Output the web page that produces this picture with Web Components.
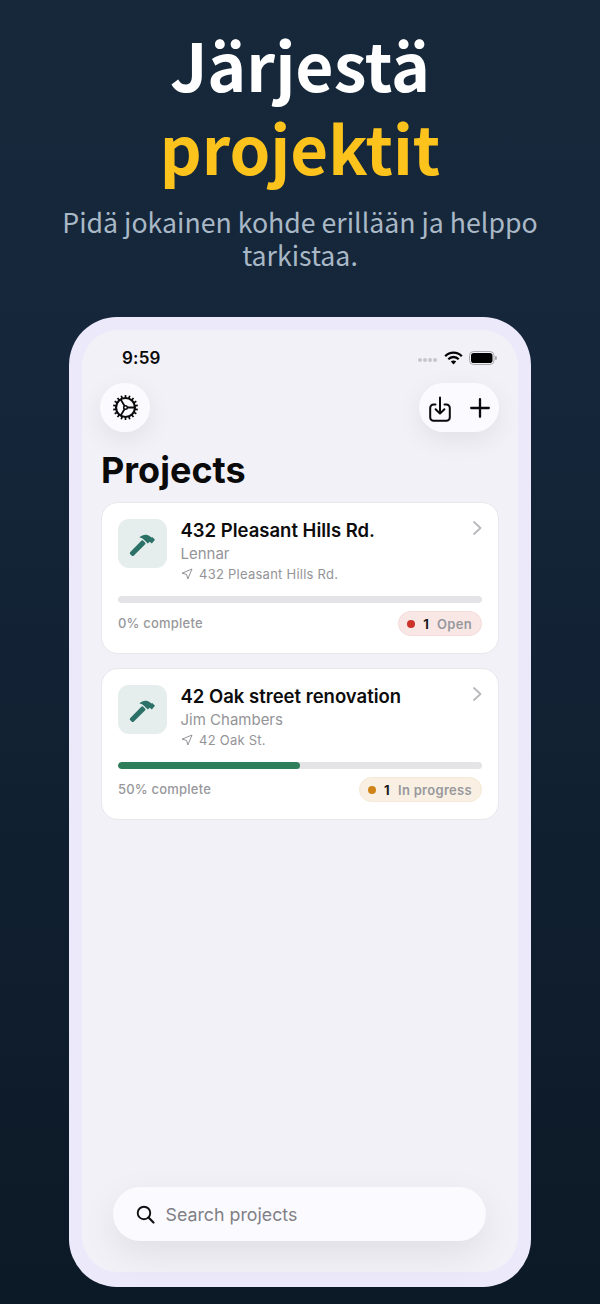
<!DOCTYPE html>
<html>
<head>
<meta charset="utf-8">
<style>
    html, body { margin: 0; padding: 0; }
    body {
        width: 600px;
        height: 1304px;
        overflow: hidden;
        background: linear-gradient(180deg, #16283a 0%, #15263a 30%, #0c1926 100%);
        font-family: 'Inter', 'Liberation Sans', sans-serif;
    }
</style>
</head>
<body>
<promo-screen>
    <span slot="line1">Järjestä</span>
    <span slot="line2">projektit</span>
    <span slot="sub">Pidä jokainen kohde erillään ja helppo tarkistaa.</span>
    <phone-frame>
        <status-bar></status-bar>
        <app-toolbar></app-toolbar>
        <div style="font: 700 36px/40px 'Inter', sans-serif; color: #0a0a0a; margin: 18px 0 12px 0;">Projects</div>
        <project-card title="432 Pleasant Hills Rd." owner="Lennar" address="432 Pleasant Hills Rd." percent="0" count="1" status="Open" tone="red"></project-card>
        <project-card title="42 Oak street renovation" owner="Jim Chambers" address="42 Oak St." percent="50" count="1" status="In progress" tone="orange" style="margin-top: 14px"></project-card>
        <search-pill placeholder="Search projects"></search-pill>
    </phone-frame>
</promo-screen>

<script>
class PromoScreen extends HTMLElement {
    constructor() {
        super()
        this.attachShadow({ mode: 'open' }).innerHTML = `
        <style>
            :host { display: block; width: 600px; height: 1304px; }
            .head { padding-top: 22px; text-align: center; font-family: 'Noto Sans CJK SC', 'Noto Sans', sans-serif; }
            .big { font-size: 66px; font-weight: 700; line-height: 83px; height: 83px; }
            .white { color: #fff; }
            .yellow { color: #fdc31d; font-size: 65.3px; }
            .sub { width: 500px; margin: 17px auto 0; color: #a9b8c6; font-size: 26.7px; line-height: 33px; font-weight: 400; }
            .stage { margin-top: 46px; display: flex; justify-content: center; }
        </style>
        <div class="head">
            <div class="big white"><slot name="line1"></slot></div>
            <div class="big yellow"><slot name="line2"></slot></div>
            <div class="sub"><slot name="sub"></slot></div>
        </div>
        <div class="stage"><slot></slot></div>`
    }
}

class PhoneFrame extends HTMLElement {
    constructor() {
        super()
        this.attachShadow({ mode: 'open' }).innerHTML = `
        <style>
            :host { display: block; width: 462px; height: 970px; box-sizing: border-box; padding: 13px 13px 15px; background: #ece9fb; border-radius: 48px; }
            .screen { height: 100%; box-sizing: border-box; padding: 0 19px 31px; background: #f2f1f7; border-radius: 36px; display: flex; flex-direction: column; }
        </style>
        <div class="screen"><slot></slot></div>`
    }
}

class StatusBar extends HTMLElement {
    constructor() {
        super()
        this.attachShadow({ mode: 'open' }).innerHTML = `
        <style>
            :host { display: flex; height: 53px; box-sizing: border-box; align-items: center; justify-content: space-between; padding: 2px 2px 0 21px; font: 600 17px 'Inter', sans-serif; color: #0a0a0a; }
            .time { letter-spacing: 0.2px; }
            .right { display: flex; align-items: center; gap: 6px; }
            .dots { display: flex; gap: 1px; margin-top: 5px; margin-right: 1px; }
            .dots i { width: 4px; height: 4px; border-radius: 50%; background: #c6c6ca; }
        </style>
        <span class="time">9:59</span>
        <div class="right">
            <div class="dots"><i></i><i></i><i></i><i></i></div>
            <svg width="19" height="14" viewBox="0 0 19 14">
                <path d="M1.2 5.2a11.6 11.6 0 0 1 16.6 0" fill="none" stroke="#000" stroke-width="2.3"/>
                <path d="M4.3 8.2a7.3 7.3 0 0 1 10.4 0" fill="none" stroke="#000" stroke-width="2.3"/>
                <path d="M6.8 10.6a3.7 3.7 0 0 1 5.4 0L9.5 13.6z" fill="#000"/>
            </svg>
            <svg width="28" height="14" viewBox="0 0 28 14">
                <rect x="0.5" y="0.5" width="24.5" height="13" rx="4" fill="none" stroke="#a9a9ad"/>
                <rect x="2" y="2" width="21.5" height="10" rx="2.8" fill="#000"/>
                <rect x="26" y="5" width="1.8" height="4" rx="0.9" fill="#a9a9ad"/>
            </svg>
        </div>`
    }
}

class AppToolbar extends HTMLElement {
    constructor() {
        super()
        const teeth = Array.from({ length: 18 }, (_, i) =>
            `<rect x="11.25" y="0.9" width="1.5" height="3" transform="rotate(${i * 20} 12 12)"/>`).join('')
        this.attachShadow({ mode: 'open' }).innerHTML = `
        <style>
            :host { display: flex; justify-content: space-between; align-items: center; }
            .btn { height: 49px; background: #fbfaff; border-radius: 25px; display: flex; align-items: center; justify-content: center; box-shadow: 0 8px 26px rgba(0,0,0,0.07); }
            .gear { width: 50px; margin-left: -1px; }
            .pair { width: 80px; gap: 19px; }
            svg { display: block; }
        </style>
        <div class="btn gear">
            <svg width="27" height="27" viewBox="0 0 24 24" fill="#0a0a0a" style="margin-top:-1px">
                ${teeth}
                <circle cx="12" cy="12" r="8.4" fill="none" stroke="#0a0a0a" stroke-width="1.9"/>
                <circle cx="12" cy="12" r="1.6" fill="none" stroke="#0a0a0a" stroke-width="1.3"/>
                <path d="M13.6 12H20M11.2 10.6 7.8 5M11.2 13.4 7.8 19" stroke="#0a0a0a" stroke-width="1.6" fill="none"/>
            </svg>
        </div>
        <div class="btn pair">
            <svg width="22" height="26" viewBox="0 0 22 26" fill="none" stroke="#0a0a0a" stroke-width="2" stroke-linecap="round" stroke-linejoin="round" style="margin-top:2px">
                <path d="M6.5 8.5H4.6A3.4 3.4 0 0 0 1.2 11.9V21.4A3.4 3.4 0 0 0 4.6 24.8H17.4A3.4 3.4 0 0 0 20.8 21.4V11.9A3.4 3.4 0 0 0 17.4 8.5H15.5"/>
                <path d="M11 1.5V17.5M6.6 13.2 11 17.6 15.4 13.2"/>
            </svg>
            <svg width="20" height="20" viewBox="0 0 20 20" stroke="#0a0a0a" stroke-width="2.3" stroke-linecap="round">
                <path d="M10 1.2V18.8M1.2 10H18.8"/>
            </svg>
        </div>`
    }
}

class ProjectCard extends HTMLElement {
    constructor() {
        super()
        const get = n => this.getAttribute(n)
        const tones = {
            red: { bg: '#f9e7e6', border: '#f5dcda', dot: '#cc3329' },
            orange: { bg: '#f9f0e3', border: '#f6e8d4', dot: '#d08318' },
        }
        const t = tones[get('tone')]
        this.attachShadow({ mode: 'open' }).innerHTML = `
        <style>
            :host { display: block; height: 152px; box-sizing: border-box; background: #fff; border: 1px solid #e8e8ec; border-radius: 17px; padding: 16px 16px 0 16px; position: relative; }
            .top { display: flex; gap: 13.5px; height: 77px; }
            .tile { width: 49px; height: 49px; border-radius: 11px; background: #e5eeec; flex: none; }
            .tile svg { display: block; }
            .title { font: 600 18.5px/25px 'Inter', sans-serif; color: #0c0c0c; margin-top: -1px; }
            .owner { font: 400 15px/20px 'Inter', sans-serif; color: #949498; margin-top: 1px; }
            .addr { display: flex; align-items: center; gap: 6px; font: 400 13px/20px 'Inter', sans-serif; color: #949498; letter-spacing: 0.25px; margin-left: 0.5px; }
            .chev { position: absolute; top: 17px; right: 16px; }
            .track { height: 7px; border-radius: 4px; background: #e4e4e6; overflow: hidden; }
            .fill { height: 100%; width: ${get('percent')}%; background: #2e7d5b; border-radius: 4px; }
            .foot { display: flex; justify-content: space-between; align-items: center; margin-top: 8px; }
            .pct { font: 500 13px 'Inter', sans-serif; color: #98989c; letter-spacing: 0.2px; margin-top: -1px; }
            .badge { display: flex; align-items: center; height: 25px; box-sizing: border-box; padding: 0 9px 0 8px; border-radius: 13px; background: ${t.bg}; border: 1px solid ${t.border}; font: 600 13px 'Inter', sans-serif; color: #98989c; letter-spacing: 0.3px; }
            .dot { width: 8px; height: 8px; border-radius: 50%; background: ${t.dot}; margin-right: 8px; }
            .num { color: #1a1a1a; font-weight: 700; margin-right: 8px; }
        </style>
        <div class="top">
            <div class="tile">
                <svg width="49" height="49" viewBox="0 0 49 49" fill="#2b7167">
                    <path d="M12.3 32.9 23.6 21.6A1 1 0 0 1 25 21.6L27.2 23.8A1 1 0 0 1 27.2 25.2L15.9 36.5A1.6 1.6 0 0 1 13.6 36.5L12.3 35.2A1.6 1.6 0 0 1 12.3 32.9Z"/>
                    <path d="M21.4 18.6C24.6 15.3 29.2 15 32.2 17.6L33.2 18.6 34.2 17.9 37 20.7 33.8 24.4 31.8 22.8 29.8 24.6 25.4 20.2C24.3 19.3 23 18.8 21.4 18.6Z"/>
                </svg>
            </div>
            <div>
                <div class="title">${get('title')}</div>
                <div class="owner">${get('owner')}</div>
                <div class="addr">
                    <svg width="12" height="12" viewBox="0 0 12 12" fill="none" stroke="#949498" stroke-width="1" stroke-linejoin="round"><path d="M11 1 1 5.2 5.6 6.4 6.8 11Z"/></svg>
                    <span>${get('address')}</span>
                </div>
            </div>
        </div>
        <svg class="chev" width="10" height="16" viewBox="0 0 10 16" fill="none" stroke="#b8b8bc" stroke-width="1.8" stroke-linecap="round" stroke-linejoin="round"><path d="M2 2 8.5 8 2 14"/></svg>
        <div class="track"><div class="fill"></div></div>
        <div class="foot">
            <span class="pct">${get('percent')}% complete</span>
            <div class="badge"><span class="dot"></span><span class="num">${get('count')}</span><span>${get('status')}</span></div>
        </div>`
    }
}

class SearchPill extends HTMLElement {
    constructor() {
        super()
        this.attachShadow({ mode: 'open' }).innerHTML = `
        <style>
            :host { display: flex; align-items: center; gap: 11px; height: 54px; margin: auto 13px 0 12px; padding: 0 0 0 22.5px; background: #fbfaff; border-radius: 27px; box-shadow: 0 12px 36px rgba(0,0,0,0.08); font: 400 17.8px 'Inter', sans-serif; color: #808085; }
            svg { display: block; flex: none; }
        </style>
        <svg width="19" height="19" viewBox="0 0 20 20" fill="none" stroke="#111" stroke-width="2" stroke-linecap="round"><circle cx="8.4" cy="8.4" r="6.6"/><path d="M13.2 13.2 18.4 18.4" stroke-width="2.3"/></svg>
        <span>${this.getAttribute('placeholder')}</span>`
    }
}

customElements.define('promo-screen', PromoScreen)
customElements.define('phone-frame', PhoneFrame)
customElements.define('status-bar', StatusBar)
customElements.define('app-toolbar', AppToolbar)
customElements.define('project-card', ProjectCard)
customElements.define('search-pill', SearchPill)
</script>
</body>
</html>
